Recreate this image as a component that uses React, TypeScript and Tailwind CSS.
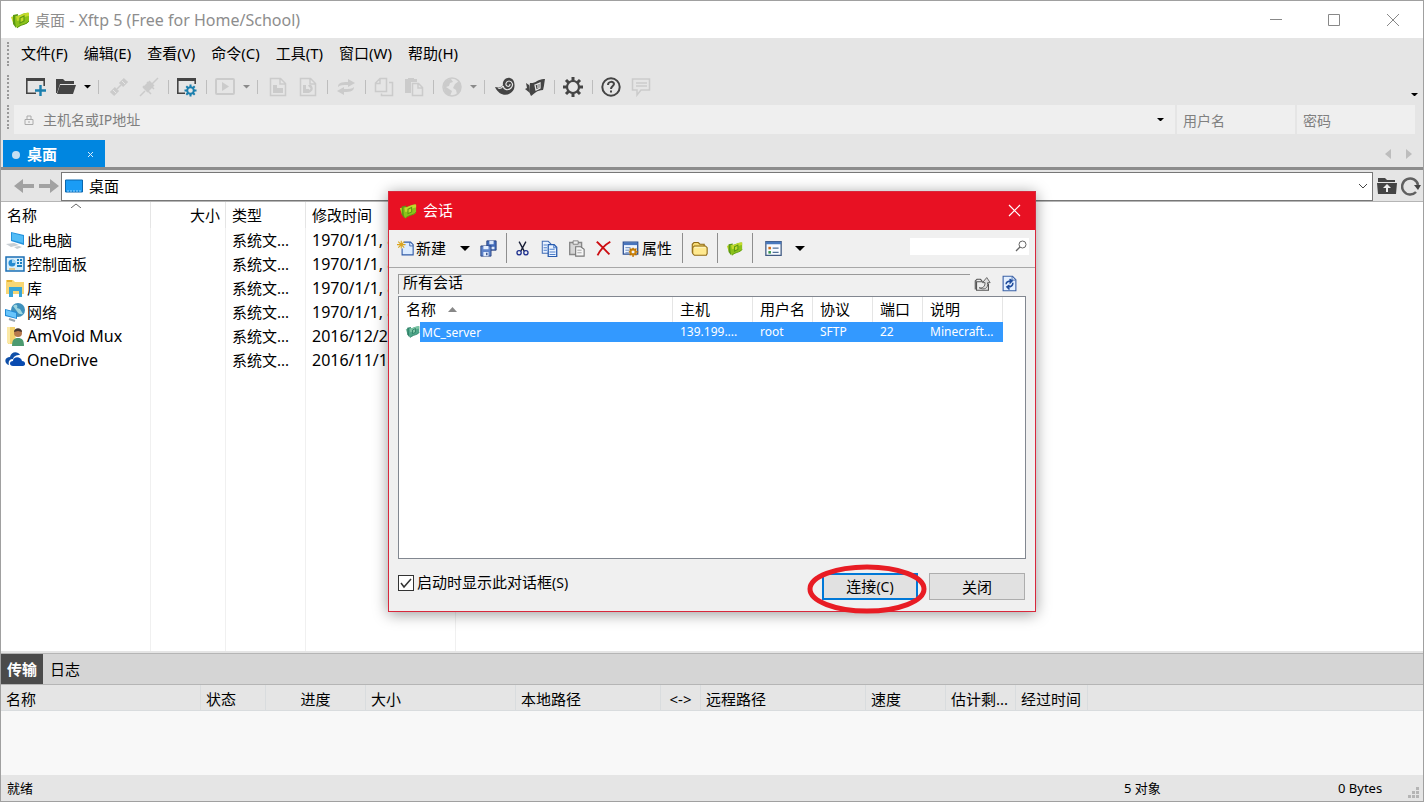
import type { ReactNode } from "react";

function Svg({ size = 20, box = 20, children }: { size?: number; box?: number; children: ReactNode }) {
  return (
    <svg width={size} height={size} viewBox={`0 0 ${box} ${box}`} fill="none" className="shrink-0" aria-hidden="true">
      {children}
    </svg>
  );
}

function Logo({ size = 20, tone = "green" }: { size?: number; tone?: "green" | "teal" }) {
  const dark = tone === "green" ? "#5c9a12" : "#2f8068";
  const mid = tone === "green" ? "#8cc21a" : "#4fa78a";
  const light = tone === "green" ? "#c3da2c" : "#7cc4a4";
  return (
    <Svg size={size}>
      <path d="M1 7l3-1 2 9-3-2z" fill={light} />
      <path d="M3 5l5-1-2 14-3-4z" fill={dark} />
      <path d="M5 6c4 1 8-4 14-3v8c-1 3-4 3-7 4-2 1-3 2-5 3-2-2-2-8-2-12z" fill={mid} />
      <path d="M6 6c4 1 8-4 13-3v3c-5 0-8 5-12 5z" fill={light} />
      <path d="M10 8l4-2v5l-4 2z" fill={light} stroke={dark} strokeWidth="1.200" />
      <path d="M7 18c2-3 7-3 10-5l2-2" stroke={dark} />
    </Svg>
  );
}

function Caret({ className = "text-black", size = 8 }: { className?: string; size?: number }) {
  return (
    <svg width={size} height={size / 2} viewBox="0 0 8 4" className={className} aria-hidden="true">
      <path d="M0 0h8L4 4z" fill="currentColor" />
    </svg>
  );
}

const ink = "#444444";
const off = "#cbcbcb";

const icons: Record<string, ReactNode> = {
  newWin: (
    <>
      <path d="M0 1h19v3H0z" fill={ink} />
      <path d="M.8 3v13.200H10M18.200 3v6" stroke={ink} strokeWidth="1.600" />
      <path d="M14.500 8v11M9 13.500h11" stroke="#1b7fae" strokeWidth="2.400" />
    </>
  ),
  open: (
    <>
      <path d="M0 2h7l2 2h9v3H4l-3 9H0z" fill={ink} />
      <path d="M4 8h16l-3 9H1z" fill={ink} />
    </>
  ),
  link: (
    <g stroke={off}>
      <path d="M3 17l5-5M12 8l5-5" strokeWidth="6" />
      <path d="M8 12l2-2M10 10l2-2" strokeWidth="1.500" />
      <path d="M4 13l3 3M13 4l3 3" stroke="#e5e5e5" />
    </g>
  ),
  unlink: (
    <g stroke={off}>
      <path d="M6 13l7-7" strokeWidth="7" />
      <path d="M1 19l5-5M13 7l6-6M4 9l8 8M8 5l7 7" strokeWidth="1.500" />
    </g>
  ),
  winGear: (
    <>
      <path d="M0 1h19v3H0z" fill={ink} />
      <path d="M.8 3v13.200H8M18.200 3v4" stroke={ink} strokeWidth="1.600" />
      <circle cx="13.500" cy="13.500" r="3.300" stroke="#1b7fae" strokeWidth="2" />
      <path d="M13.500 7.500V10M13.500 17v2.500M7.500 13.500H10M17 13.500h2.500M9.300 9.300L11 11M16 16l1.700 1.700M17.700 9.300L16 11M11 16l-1.700 1.700" stroke="#1b7fae" strokeWidth="2" />
    </>
  ),
  play: (
    <>
      <rect x="1" y="2" width="18" height="15" rx="1" stroke={off} strokeWidth="2" />
      <path d="M7 5l7 4.500L7 14z" fill={off} />
    </>
  ),
  docIn: (
    <>
      <path d="M2.500 1.500h10l5 5v12h-15zM12 2v5h5" stroke={off} strokeWidth="1.500" />
      <path d="M5 8h4v3h6v5H5z" fill={off} />
    </>
  ),
  docOut: (
    <>
      <path d="M2.500 1.500h10l5 5v12h-15zM12 2v5h5" stroke={off} strokeWidth="1.500" />
      <path d="M5 8h3v4h3v4H5zM10 8h3c3 3 2 6-2 8v-3c2-1 2-2 0-3z" fill={off} />
    </>
  ),
  swap: (
    <path d="M2 10c0-4 3-5 10-5V2l7 4-7 4V8C7 8 4 8 2 10zM18 10c0 4-3 5-10 5v3l-7-4 7-4v2c5 0 8 0 10-2z" fill={off} />
  ),
  copy: (
    <path d="M6 1.500h6.500v13h-11V6zM6 2v4.500H2M15 5.500h3.500v13h-11v-2" stroke={off} strokeWidth="1.500" />
  ),
  paste: (
    <>
      <path d="M1 2h3V1h6v1h3v3H7v11H1z" fill={off} />
      <path d="M8.500 6.500h6l4 4v8h-10zM14 7v4h4" stroke={off} strokeWidth="1.500" />
    </>
  ),
  globe: (
    <>
      <circle cx="10" cy="10" r="9" stroke={off} strokeWidth="1.500" />
      <path d="M2 7c2-4 4-5 7-5l2 3-3 1-1 3-3 1 3 2 3 2-2 5c-4-1-7-6-6-12zM13 7l4-3 2 5-1 6-3 2-1-4-3-2z" fill={off} />
    </>
  ),
  shell: (
    <>
      <path d="M0 10c4 1 7 0 8-2C7 4 11 0 15 1c5 1 5 8 4 11-3 7-14 9-19-2z" fill={ink} />
      <path d="M8 9c1 4 5 5 8 2s1-7-2-7-4 4-2 5 3 0 3-2M3 11c3 1 4 0 5-2" stroke="#e5e5e5" strokeWidth="1.200" />
    </>
  ),
  fold: (
    <>
      <path d="M5 6c5 1 9-5 15-4-1 6-1 8-2 11-6 0-9 4-12 6-2-3-2-8-1-13z" fill={ink} />
      <path d="M1 6l3 2 1 8-5-4 2-1z" fill={ink} />
      <path d="M10 8l5-2v5l-4 2zM13 7v4" stroke="#e5e5e5" strokeWidth="1.300" />
    </>
  ),
  gear: (
    <>
      <circle cx="10" cy="10" r="6" stroke={ink} strokeWidth="2.200" />
      <path d="M10 0v4M10 16v4M0 10h4M16 10h4M3 3l3 3M14 14l3 3M17 3l-3 3M6 14l-3 3" stroke={ink} strokeWidth="3" />
    </>
  ),
  help: (
    <>
      <circle cx="10" cy="10" r="8.700" stroke={ink} strokeWidth="2" />
      <path d="M7 8c0-4 6-4 6-1 0 2-3 2-3 5M10 13.500v2" stroke={ink} strokeWidth="2" />
    </>
  ),
  chat: (
    <path d="M1.500 2h17v11H10l-4 5v-5H1.500zM5 6h11M5 9h11" stroke={off} strokeWidth="1.500" />
  ),
  pc: (
    <>
      <path d="M6 2l13 3v10L6 11z" fill="#2492dc" />
      <path d="M7 3l11 3v7L7 10z" fill="#53bcf6" />
      <path d="M1 14l8-1 5 2-8 2zM9 17l5-1 3 1-5 2z" fill="#c7ced3" />
    </>
  ),
  panel: (
    <>
      <rect x="1" y="3" width="18" height="14" fill="#d8eefb" stroke="#1b6fb5" strokeWidth="1.500" />
      <circle cx="7" cy="9" r="3.500" fill="#258bd2" />
      <path d="M7 9V5.500A3.500 3.500 0 0110.500 9z" fill="#a8d8f5" />
      <path d="M12 6h2M15 6h2M12 9h2M15 9h2M12 12h5" stroke="#1b7fc0" strokeWidth="2" />
      <path d="M4 15h6" stroke="#e8a020" />
    </>
  ),
  library: (
    <>
      <path d="M1 2h7l2 2h9v12H1z" fill="#f8d775" />
      <path d="M4 19V9h13v10h-3v-6H8v6z" fill="#38a6d8" />
      <path d="M2 3h5" stroke="#e1a61a" strokeWidth="1.500" />
    </>
  ),
  network: (
    <>
      <circle cx="13" cy="8" r="7" fill="#3f91bd" />
      <path d="M8 4c4-3 5 0 4 2l3 1 3 5c-5 1-5-2-7-4z" fill="#9dd5df" />
      <path d="M0 7l12 3v7L0 14z" fill="#218ad5" />
      <path d="M1 8l10 3v5L1 13z" fill="#68c5fb" />
      <path d="M4 17l6 2" stroke="#9aa5ad" strokeWidth="2" />
    </>
  ),
  user: (
    <>
      <path d="M2 1h8l1 17H3z" fill="#f3d26d" />
      <path d="M2 1h3v17l-3-1z" fill="#fbe9a7" />
      <circle cx="13" cy="7" r="4" fill="#b7794c" />
      <path d="M9 6c0-5 8-5 8 0l-4-1z" fill="#46362d" />
      <path d="M7 20c0-6 2-8 6-8s6 2 6 8z" fill="#4c9a70" />
    </>
  ),
  cloud: (
    <>
      <path d="M1 13c-2-4 1-6 4-6 1-6 8-6 10-2-4 0-6 1-7 4-4 0-5 3-4 6-1 0-2-1-3-2z" fill="#0f4fa8" />
      <path d="M8 16c-4 0-4-5 0-5 0-5 8-5 9 0 4 0 4 5 1 5z" fill="#094bb0" />
    </>
  ),
  dNew: (
    <>
      <path d="M8 2.500h8l3 3v12H6V10" fill="#dcecff" stroke="#315ba8" strokeWidth="1.300" />
      <path d="M15 3v4h4" stroke="#315ba8" />
      <path d="M5 1v9M0 5.500h10M1.500 2l7 7M8.500 2l-7 7" stroke="#d9a520" strokeWidth="1.300" />
    </>
  ),
  save: (
    <>
      <path d="M8 1h11v11H8z" fill="#426bb9" stroke="#233d7c" />
      <path d="M11 1h5v4h-5zM10 8h7v3h-7z" fill="#dce8fa" />
      <path d="M1 7h12v12H1z" fill="#5e83c9" stroke="#233d7c" />
      <path d="M4 7h6v4H4zM4 14h6v5H4z" fill="#e5efff" />
      <path d="M8 15v3" stroke="#233d7c" strokeWidth="1.500" />
    </>
  ),
  cut: (
    <>
      <path d="M6 2l6 11M14 2L8 13" stroke="#171d35" strokeWidth="1.600" />
      <circle cx="6" cy="15" r="2.500" stroke="#1b2d8d" strokeWidth="1.500" />
      <circle cx="14" cy="15" r="2.500" stroke="#1b2d8d" strokeWidth="1.500" />
    </>
  ),
  dCopy: (
    <>
      <path d="M1.500 1.500h7l3 3v11h-10z" fill="#e8f1ff" stroke="#416cb4" strokeWidth="1.200" />
      <path d="M8.500 5.500h7l3 3v11h-10z" fill="#eaf3ff" stroke="#285bae" strokeWidth="1.500" />
      <path d="M15 6v3h3M3 6h4M3 9h4M3 12h4M10 11h6M10 14h7M10 17h7" stroke="#4f80cb" strokeWidth="1.200" />
    </>
  ),
  dPaste: (
    <>
      <path d="M2 3h14v14H2z" fill="#d6d6d6" stroke="#888" strokeWidth="1.600" />
      <path d="M6 1h6v4H6z" fill="#eee" stroke="#777" />
      <path d="M9 8h6l4 3v8H9z" fill="#f6f6f6" stroke="#777" strokeWidth="1.300" />
      <path d="M11 12h5M11 15h5" stroke="#999" />
    </>
  ),
  del: <path d="M2 2c4 3 9 9 15 15M18 2C11 6 6 12 3 18" stroke="#cc0d12" strokeWidth="2.200" />,
  props: (
    <>
      <path d="M1.500 2.500h17v14h-17z" fill="#eef5ff" stroke="#294e93" strokeWidth="1.500" />
      <path d="M2 3h16v3H2z" fill="#4975bd" />
      <path d="M4 9h6M4 12h5M4 15h4" stroke="#5279b2" />
      <circle cx="13" cy="14" r="3" stroke="#d38b0d" strokeWidth="2.500" />
      <path d="M13 9v3M13 17v3M8 14h2M16 14h3M9 10l2 2M15 16l2 2M17 10l-2 2M11 16l-2 2" stroke="#b86c00" strokeWidth="1.500" />
    </>
  ),
  folder: (
    <>
      <path d="M1.500 15V5l2-2h5l2 2h5v3" fill="#f7db75" stroke="#8f6a15" strokeWidth="1.300" />
      <path d="M4 7h13l2 2v7l-1 2H4l-2-2V9z" fill="#ffe98f" stroke="#8f6a15" strokeWidth="1.300" />
      <path d="M4 9h13" stroke="#fff7c9" />
    </>
  ),
  list: (
    <>
      <path d="M1 2h18v16H1z" fill="#f8fbff" stroke="#415a83" strokeWidth="1.500" />
      <path d="M1 2h18v3H1z" fill="#4979bd" />
      <path d="M4 8h3v3H4z" fill="#d56c15" />
      <path d="M4 13h3v3H4z" fill="#369349" />
      <path d="M9 9.500h7M9 14.500h7" stroke="#517199" strokeWidth="1.500" />
    </>
  ),
  up: (
    <>
      <path d="M1.500 17V7l2-2h4l2 2M3 8h11l3 3v7H3z" fill="#eee" stroke="#555" strokeWidth="1.300" />
      <path d="M6 15c5 1 7-2 7-6h-3l5-6 4 6h-3c1 7-4 9-10 6z" fill="#ddd" stroke="#555" />
    </>
  ),
  reload: (
    <>
      <path d="M2.500 1.500h11l4 4v13h-15z" fill="#e4f0ff" stroke="#3b61a7" strokeWidth="1.300" />
      <path d="M13 2v4h4" stroke="#3b61a7" />
      <path d="M6 11c0-3 2-4 6-4M10 5l3 2-3 3M14 9c0 4-2 5-6 5M10 12l-3 2 3 3" stroke="#1e4b9c" strokeWidth="1.800" />
    </>
  ),
  folderUp: (
    <>
      <path d="M1 2h7l2 2h8v3H1zM0 7h20l-1 11H1z" fill={ink} />
      <path d="M1 6.500h18" stroke="#e5e5e5" />
      <path d="M10 8l4 4h-3v4H9v-4H6z" fill="#eee" />
    </>
  ),
  refresh: (
    <>
      <path d="M15 16a8 8 0 112-7" stroke="#606060" strokeWidth="2.500" />
      <path d="M13 9h7l-3 5z" fill="#444" />
    </>
  ),
  back: <path d="M9 3v5h11v4H9v5l-9-7z" fill="#a2a2a2" />,
  forward: <path d="M11 3v5H0v4h11v5l9-7z" fill="#a2a2a2" />,
};

function Icon({ name, size = 20 }: { name: string; size?: number }) {
  return <Svg size={size}>{icons[name]}</Svg>;
}

const menus = ["文件(F)", "编辑(E)", "查看(V)", "命令(C)", "工具(T)", "窗口(W)", "帮助(H)"];

// "|" is a divider, "v" and "g" are black and grey drop-down arrows
const tools = [
  "newWin", "open", "v", "|", "link", "unlink", "|", "winGear", "|", "play", "g", "|", "docIn", "docOut", "|",
  "swap", "|", "copy", "paste", "|", "globe", "g", "|", "shell", "fold", "|", "gear", "|", "help", "chat",
];

const files = [
  { icon: "pc", name: "此电脑", date: "1970/1/1, 8" },
  { icon: "panel", name: "控制面板", date: "1970/1/1, 8" },
  { icon: "library", name: "库", date: "1970/1/1, 8" },
  { icon: "network", name: "网络", date: "1970/1/1, 8" },
  { icon: "user", name: "AmVoid Mux", latin: true, date: "2016/12/2" },
  { icon: "cloud", name: "OneDrive", latin: true, date: "2016/11/14" },
];

const transferColumns = [
  { label: "名称", cell: "w-[200px] pl-[5px]" },
  { label: "状态", cell: "w-[65px] pl-[5px]" },
  { label: "进度", cell: "w-[100px] text-center" },
  { label: "大小", cell: "w-[150px] pl-[5px]" },
  { label: "本地路径", cell: "w-[145px] pl-[5px]" },
  { label: "<->", cell: "w-[40px] text-center" },
  { label: "远程路径", cell: "w-[165px] pl-[5px]" },
  { label: "速度", cell: "w-[80px] pl-[5px]" },
  { label: "估计剩...", cell: "w-[70px] pl-[5px]" },
  { label: "经过时间", cell: "w-[72px] pl-[5px]" },
];

function Grip() {
  return <span className="ml-[6px] h-6 w-0 shrink-0 border-l-2 border-dotted border-[#999]" />;
}

function TitleBar() {
  return (
    <header className="flex h-[37px] items-center bg-white pl-[9px] text-[#8d8d8d]">
      <Logo />
      <h1 className="ml-[5px] flex-1 text-[15px]">
        桌面<span className="text-[16px]"> - Xftp 5 (Free for Home/School)</span>
      </h1>
      <button aria-label="最小化" className="flex h-full w-[58px] items-center justify-center">
        <Svg size={12} box={12}><path d="M0 5.500h12" stroke="#888" /></Svg>
      </button>
      <button aria-label="最大化" className="flex h-full w-[58px] items-center justify-center">
        <Svg size={12} box={12}><path d="M.5.5h11v11H.5z" stroke="#888" /></Svg>
      </button>
      <button aria-label="关闭窗口" className="flex h-full w-[60px] items-center justify-center">
        <Svg size={12} box={12}><path d="M0 0l12 12M12 0L0 12" stroke="#888" /></Svg>
      </button>
    </header>
  );
}

function ToolBar() {
  return (
    <div className="flex h-[36px] items-center">
      <Grip />
      <div className="ml-3 flex flex-1 items-center">
        {tools.map((tool, i) => {
          if (tool === "|") {
            const wide = tools[i - 1] === "v" || tools[i - 1] === "g";
            return (
              <span key={i} className={`flex justify-center ${wide ? "w-[11px]" : "w-2"}`}>
                <span className="h-[14px] w-px bg-[#bdbdbd]" />
              </span>
            );
          }
          if (tool === "v" || tool === "g") {
            return (
              <button key={i} aria-label="更多" className="flex h-6 w-3 items-center justify-center">
                <Caret className={tool === "v" ? "text-black" : "text-[#8a8a8a]"} size={7} />
              </button>
            );
          }
          return (
            <button key={i} aria-label={tool} className="flex h-6 w-[30px] items-center justify-center">
              <Icon name={tool} />
            </button>
          );
        })}
      </div>
      <button aria-label="工具栏选项" className="mr-[5px] self-end pb-[9px]">
        <Caret size={7} />
      </button>
    </div>
  );
}

function AddressBar() {
  return (
    <div className="flex h-[30px] text-[14px] text-[#777]">
      <Grip />
      <div className="ml-[5px] mr-2 flex h-[29px] flex-1 gap-[2px]">
        <label className="flex flex-1 items-center bg-[#efefef] pl-[10px]">
          <Svg size={10} box={10}>
            <path d="M1 4.500h8v5H1zM3 4V1h4v3M5 6v2" stroke="#aaa" />
          </Svg>
          <input aria-label="主机名或IP地址" placeholder="主机名或IP地址" className="ml-[9px] min-w-0 flex-1 outline-none placeholder:text-[#808080]" />
          <button aria-label="历史主机" className="mr-[11px]"><Caret size={7} /></button>
        </label>
        <input aria-label="用户名" placeholder="用户名" className="w-[118px] bg-[#efefef] px-[6px] pt-[2px] outline-none placeholder:text-[#808080]" />
        <input aria-label="密码" type="password" placeholder="密码" className="w-[118px] bg-[#efefef] px-[6px] pt-[2px] outline-none placeholder:text-[#808080]" />
      </div>
    </div>
  );
}

function TabBar() {
  return (
    <div className="flex h-[35px] items-end border-b-3 border-[#8c8c8c] pl-[2px]">
      <div className="flex h-[27px] w-[102px] items-center bg-[#0086e0] pl-[9px] pr-[11px] pt-[2px] text-white">
        <span className="size-2 rounded-full bg-[#c5dff2]" />
        <button className="ml-[7px] flex-1 text-left text-[15px] font-bold">桌面</button>
        <button aria-label="关闭标签" className="flex">
          <Svg size={7} box={7}><path d="M1 1l5 5M6 1L1 6" stroke="#d9edfb" /></Svg>
        </button>
      </div>
      <div className="ml-auto mr-[9px] flex gap-[11px] pb-2">
        <button aria-label="向左"><Svg size={10} box={10}><path d="M8 0v10L2 5z" fill="#bdbdbd" /></Svg></button>
        <button aria-label="向右"><Svg size={10} box={10}><path d="M2 0v10l6-5z" fill="#bdbdbd" /></Svg></button>
      </div>
    </div>
  );
}

function PathBar() {
  return (
    <div className="flex h-[32px] items-center border-b border-[#b5b5b5] pr-[2px] pt-px">
      <button aria-label="后退" className="ml-[13px]"><Icon name="back" /></button>
      <button aria-label="前进" className="ml-[5px]"><Icon name="forward" /></button>
      <div className="ml-[2px] flex h-[29px] flex-1 items-center border border-[#777] bg-white pl-[3px]">
        <Svg size={18} box={18}>
          <path d="M.5 3h17v12H.5z" fill="#1a9cf5" stroke="#0b66ad" />
          <path d="M2 14h14" stroke="#9bd6ff" strokeDasharray="2 1" />
        </Svg>
        <select aria-label="当前位置" className="ml-[6px] flex-1 appearance-none text-[15px] outline-none">
          <option>桌面</option>
        </select>
        <Svg size={10} box={10}><path d="M1 3l4 4 4-4" stroke="#444" /></Svg>
        <span className="w-1" />
      </div>
      <button aria-label="上一级" className="ml-1"><Icon name="folderUp" /></button>
      <button aria-label="刷新" className="ml-1"><Icon name="refresh" /></button>
    </div>
  );
}

function FileList() {
  return (
    <main className="flex flex-1 flex-col bg-white text-[15px]">
      <table className="w-full table-fixed border-separate border-spacing-0 leading-5">
        <colgroup>
          <col className="w-[150px]" />
          <col className="w-[75px]" />
          <col className="w-[80px]" />
          <col className="w-[150px]" />
          <col />
        </colgroup>
        <thead>
          <tr className="h-[26px] text-left *:border-r *:border-[#e5e5e5] *:font-normal">
            <th className="relative pl-[6px]">
              名称
              <svg width="10" height="5" viewBox="0 0 10 5" fill="none" className="absolute left-[70px] top-px" aria-hidden="true">
                <path d="M0 5l5-4 5 4" stroke="#666" />
              </svg>
            </th>
            <th className="pr-[5px] text-right">大小</th>
            <th className="pl-[6px]">类型</th>
            <th className="pl-[6px]">修改时间</th>
            <th className="border-none" />
          </tr>
        </thead>
        <tbody>
          {files.map((file) => (
            <tr key={file.name} className="h-6 whitespace-nowrap *:border-r *:border-[#f0f0f0]">
              <td>
                <span className="flex items-center gap-[2px] pl-1">
                  <Icon name={file.icon} />
                  <span className={file.latin ? "text-[16px]" : ""}>{file.name}</span>
                </span>
              </td>
              <td />
              <td className="pl-[6px]">系统文...</td>
              <td className="pl-[6px] text-[16px]">{file.date}</td>
              <td className="border-none" />
            </tr>
          ))}
        </tbody>
      </table>
      <div className="flex flex-1 *:border-r *:border-[#f0f0f0]">
        <span className="w-[150px]" />
        <span className="w-[75px]" />
        <span className="w-[80px]" />
        <span className="w-[150px]" />
      </div>
    </main>
  );
}

function Transfers() {
  return (
    <section className="mt-[2px] border-t border-[#b5b5b5] text-[15px]">
      <div className="flex h-[31px] border-b border-[#b5b5b5] bg-[#d5d5d5]">
        <button className="w-[42px] bg-[#4b4b4b] font-bold text-white">传输</button>
        <button className="px-[7px]">日志</button>
      </div>
      <div className="h-[90px] bg-[#f8f8f8]">
        <table className="w-full table-fixed border-separate border-spacing-0 bg-[#e5e5e5] leading-5">
          <thead>
            <tr className="h-[26px] text-left *:border-b *:border-[#d9dcde]">
              {transferColumns.map((column) => (
                <th key={column.label} className={`whitespace-nowrap border-r pt-[2px] font-normal ${column.cell}`}>
                  {column.label}
                </th>
              ))}
              <th />
            </tr>
          </thead>
        </table>
      </div>
    </section>
  );
}

function StatusBar() {
  return (
    <footer className="flex h-[26px] items-center pl-[6px] pt-[2px] text-[13px]">
      <span>就绪</span>
      <span className="ml-auto w-[214px]">5 对象</span>
      <span className="w-[70px]">0 Bytes</span>
      <span className="flex h-full w-[15px] items-end pb-[2px]">
        <Svg size={12} box={12}>
          <path d="M8 0h3v3H8zM8 4h3v3H8zM4 4h3v3H4zM8 8h3v3H8zM4 8h3v3H4zM0 8h3v3H0z" fill="#b5b5b5" />
        </Svg>
      </span>
    </footer>
  );
}

function Divider() {
  return <span className="h-[30px] w-px bg-[#8e8e8e]" />;
}

function DialogTool({ name, label }: { name: string; label: string }) {
  return (
    <button aria-label={label} className="flex h-7 w-[27px] items-center justify-center">
      {name === "logo" ? <Logo size={17} /> : <Icon name={name} size={17} />}
    </button>
  );
}

function SessionDialog() {
  return (
    <section
      role="dialog"
      aria-label="会话"
      className="w-[648px] border border-[#d8283c] bg-[#f0f0f0] text-[15px] shadow-[0_2px_14px_rgba(0,0,0,0.4)]"
    >
      <div className="flex h-[38px] items-center bg-[#e81123] pl-[10px] pr-[14px] text-white">
        <Logo size={18} />
        <h2 className="ml-[6px] flex-1">会话</h2>
        <button aria-label="关闭对话框">
          <Svg size={13} box={13}><path d="M1 1l11 11M12 1L1 12" stroke="#fff" strokeWidth="1.200" /></Svg>
        </button>
      </div>

      <div className="flex h-[38px] items-center border-b border-[#a8a8a8] pl-2 pr-[6px]">
        <button className="flex items-center gap-[2px]"><Icon name="dNew" size={17} />新建</button>
        <button aria-label="新建选项" className="ml-[9px] flex w-5 justify-center"><Caret size={10} /></button>
        <DialogTool name="save" label="保存" />
        <span className="w-[4px]" />
        <Divider />
        <span className="w-[2px]" />
        <DialogTool name="cut" label="剪切" />
        <DialogTool name="dCopy" label="复制" />
        <DialogTool name="dPaste" label="粘贴" />
        <DialogTool name="del" label="删除" />
        <button className="ml-[5px] mr-[10px] flex items-center gap-[3px]"><Icon name="props" size={17} />属性</button>
        <Divider />
        <span className="w-[3px]" />
        <DialogTool name="folder" label="新建文件夹" />
        <span className="w-1" />
        <Divider />
        <span className="w-[3px]" />
        <DialogTool name="logo" label="Xftp" />
        <span className="w-1" />
        <Divider />
        <span className="w-[7px]" />
        <DialogTool name="list" label="查看" />
        <button aria-label="查看选项" className="ml-[3px] flex w-5 justify-center"><Caret size={10} /></button>
        <label className="mb-1 ml-auto flex h-[17px] w-[119px] items-center bg-white pr-[2px]">
          <input aria-label="搜索会话" className="min-w-0 flex-1 text-[12px] outline-none" />
          <Svg size={12} box={12}>
            <circle cx="7.500" cy="4.500" r="3.500" stroke="#666" />
            <path d="M5 7l-4 4" stroke="#666" strokeWidth="1.300" />
          </Svg>
        </label>
      </div>

      <div className="flex items-center px-[9px] pt-1">
        <div className="flex h-5 flex-1 items-center border-l border-t border-[#999] pb-1 pl-1">所有会话</div>
        <span className="ml-1 flex h-6 items-center gap-[10px] pr-2">
          <button aria-label="上一级"><Icon name="up" size={17} /></button>
          <button aria-label="刷新"><Icon name="reload" size={17} /></button>
        </span>
      </div>

      <div className="mx-[9px] h-[263px] border border-[#828790] bg-white">
        <table className="w-[604px] table-fixed border-separate border-spacing-0 leading-4">
          <colgroup>
            <col className="w-[274px]" />
            <col className="w-20" />
            <col className="w-[60px]" />
            <col className="w-[60px]" />
            <col className="w-[50px]" />
            <col />
          </colgroup>
          <thead>
            <tr className="h-[25px] text-left *:border-r *:border-[#e5e5e5] *:pl-[7px] *:font-normal">
              <th>
                <span className="flex items-center gap-3">
                  名称
                  <svg width="9" height="5" viewBox="0 0 9 5" aria-hidden="true"><path d="M0 5l4.500-5L9 5z" fill="#888" /></svg>
                </span>
              </th>
              <th>主机</th>
              <th className="whitespace-nowrap">用户名</th>
              <th>协议</th>
              <th>端口</th>
              <th>说明</th>
            </tr>
          </thead>
          <tbody>
            <tr className="h-5 whitespace-nowrap text-[12px] text-white *:bg-[#3399ff] *:pl-[7px] *:pt-px">
              <td className="bg-white! pl-[6px]! pt-0!">
                <span className="flex items-center">
                  <Logo size={15} tone="teal" />
                  <span className="h-5 flex-1 bg-[#3399ff] pl-[2px] pt-px leading-5">MC_server</span>
                </span>
              </td>
              <td>139.199....</td>
              <td>root</td>
              <td>SFTP</td>
              <td>22</td>
              <td>Minecraft...</td>
            </tr>
          </tbody>
        </table>
      </div>

      <div className="flex h-[52px] items-center pl-[9px] pr-[10px] pt-1">
        <label className="mb-2 flex flex-1 items-center gap-[3px]">
          <span className="relative flex">
            <input
              type="checkbox"
              defaultChecked
              className="peer size-4 appearance-none border border-[#333] bg-white"
            />
            <svg width="16" height="16" viewBox="0 0 16 16" fill="none" className="pointer-events-none absolute inset-0 hidden peer-checked:block" aria-hidden="true">
              <path d="M3 8l3 4 7-8" stroke="#333" strokeWidth="1.500" />
            </svg>
          </span>
          <span>启动时显示此对话框<span className="text-[14px]">(S)</span></span>
        </label>
        <div className="relative">
          <button className="h-[27px] w-24 border-2 border-[#0078d7] bg-[#e1e1e1] leading-5">
            连接<span className="text-[14px]">(C)</span>
          </button>
          <svg width="122" height="52" viewBox="0 0 122 52" fill="none" className="pointer-events-none absolute -left-[15px] -top-[10px] max-w-none" aria-hidden="true">
            <ellipse cx="60" cy="26" rx="57" ry="22" stroke="#e81c24" strokeWidth="5" />
          </svg>
        </div>
        <button className="ml-[11px] h-[27px] w-24 border border-[#adadad] bg-[#e1e1e1] leading-5">关闭</button>
      </div>
    </section>
  );
}

export default function App() {
  return (
    <div className="relative flex min-h-screen flex-col border border-[#a0a0a0] bg-[#e5e5e5] font-['Noto_Sans','Noto_Sans_CJK_SC',sans-serif] text-black">
      <TitleBar />
      <nav className="flex h-[31px] items-center text-[15px]">
        <Grip />
        <div className="ml-3 flex gap-4">
          {menus.map((menu) => (
            <button key={menu}>{menu}</button>
          ))}
        </div>
      </nav>
      <ToolBar />
      <AddressBar />
      <TabBar />
      <PathBar />
      <FileList />
      <Transfers />
      <StatusBar />
      <div className="absolute inset-0 flex items-center justify-center">
        <SessionDialog />
      </div>
    </div>
  );
}
